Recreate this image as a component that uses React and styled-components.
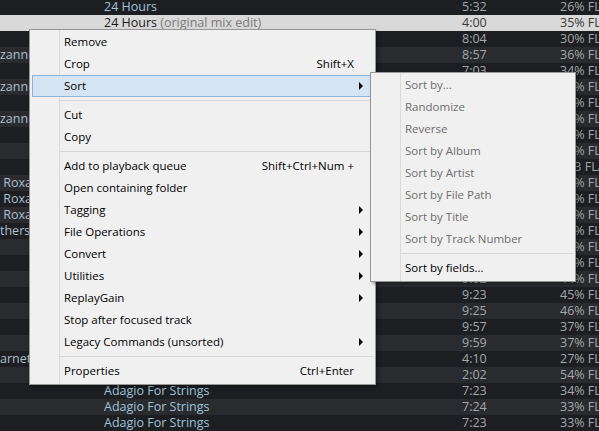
import React from "react";
import styled, { createGlobalStyle } from "styled-components";

const GlobalStyle = createGlobalStyle`
  html, body {
    margin: 0;
    padding: 0;
    width: 599px;
    height: 431px;
    overflow: hidden;
    background: #1e1f22;
  }
  * {
    box-sizing: border-box;
  }
`;

const rows = [
  { title: "24 Hours", time: "5:32", pct: "26% FLAC" },
  { title: "24 Hours", extra: "(original mix edit)", time: "4:00", pct: "35% FLAC", selected: true },
  { time: "8:04", pct: "30% FLAC" },
  { artist: "zanne", time: "8:57", pct: "36% FLAC" },
  { time: "7:03", pct: "34% FLAC" },
  { artist: "zanne", time: "7:12", pct: "31% FLAC" },
  { time: "6:40", pct: "33% FLAC" },
  { artist: "zanne", time: "7:45", pct: "29% FLAC" },
  { time: "5:58", pct: "32% FLAC" },
  { time: "6:21", pct: "38% FLAC" },
  { time: "8:10", pct: "153 FLAC" },
  { artist: " Roxa", time: "4:48", pct: "41% FLAC" },
  { artist: " Roxa", time: "5:05", pct: "40% FLAC" },
  { artist: " Roxa", time: "4:52", pct: "39% FLAC" },
  { artist: "thers", time: "6:33", pct: "35% FLAC" },
  { time: "7:01", pct: "36% FLAC" },
  { time: "8:44", pct: "42% FLAC" },
  { time: "9:02", pct: "44% FLAC" },
  { time: "9:23", pct: "45% FLAC" },
  { time: "9:25", pct: "46% FLAC" },
  { time: "9:57", pct: "37% FLAC" },
  { time: "9:59", pct: "37% FLAC" },
  { artist: "arnet", time: "4:10", pct: "27% FLAC" },
  { time: "2:02", pct: "54% FLAC" },
  { title: "Adagio For Strings", time: "7:23", pct: "34% FLAC" },
  { title: "Adagio For Strings", time: "7:24", pct: "33% FLAC" },
  { title: "Adagio For Strings", time: "7:23", pct: "33% FLAC" },
];

const mainItems = [
  { label: "Remove" },
  { label: "Crop", shortcut: "Shift+X" },
  { label: "Sort", sub: true, hot: true },
  { sep: true },
  { label: "Cut" },
  { label: "Copy" },
  { sep: true },
  { label: "Add to playback queue", shortcut: "Shift+Ctrl+Num +" },
  { label: "Open containing folder" },
  { label: "Tagging", sub: true },
  { label: "File Operations", sub: true },
  { label: "Convert", sub: true },
  { label: "Utilities", sub: true },
  { label: "ReplayGain", sub: true },
  { label: "Stop after focused track" },
  { label: "Legacy Commands (unsorted)", sub: true },
  { sep: true },
  { label: "Properties", shortcut: "Ctrl+Enter" },
];

const sortItems = [
  { label: "Sort by...", disabled: true },
  { label: "Randomize", disabled: true },
  { label: "Reverse", disabled: true },
  { label: "Sort by Album", disabled: true },
  { label: "Sort by Artist", disabled: true },
  { label: "Sort by File Path", disabled: true },
  { label: "Sort by Title", disabled: true },
  { label: "Sort by Track Number", disabled: true },
  { sep: true },
  { label: "Sort by fields..." },
];

function ContextMenu({ items, top, left, width }) {
  return (
    <Menu $top={top} $left={left} $width={width}>
      {items.map((item, index) =>
        item.sep ? (
          <Separator key={index} />
        ) : (
          <Item key={index} $hot={item.hot} $disabled={item.disabled}>
            <Label>{item.label}</Label>
            <Shortcut>{item.shortcut}</Shortcut>
            <ArrowCell>{item.sub && <Arrow />}</ArrowCell>
          </Item>
        )
      )}
    </Menu>
  );
}

export default function App() {
  return (
    <Screen>
      <GlobalStyle />
      <Playlist>
        {rows.map((row, index) => (
          <Row key={index} $odd={index % 2 === 1} $selected={row.selected}>
            <Artist>{row.artist}</Artist>
            <Title $selected={row.selected}>
              {row.title}
              {row.extra && <Extra> {row.extra}</Extra>}
            </Title>
            <Time $selected={row.selected}>{row.time}</Time>
            <Pct $selected={row.selected}>{row.pct}</Pct>
          </Row>
        ))}
      </Playlist>
      <ContextMenu items={mainItems} top={29} left={29} width={347} />
      <ContextMenu items={sortItems} top={72} left={370} width={206} />
    </Screen>
  );
}

const Screen = styled.div`
  position: relative;
  width: 599px;
  height: 431px;
  overflow: hidden;
  font-family: "Open Sans", "Noto Sans", sans-serif;
`;

const Playlist = styled.div`
  display: flex;
  flex-direction: column;
  margin-top: -1px;
`;

const Row = styled.div`
  display: grid;
  grid-template-columns: 104px 358px 30px 1fr;
  height: 16px;
  align-items: center;
  font-size: 12.5px;
  line-height: 16px;
  white-space: nowrap;
  background: ${(p) => (p.$selected ? "#d9d9d9" : p.$odd ? "#2a2b2f" : "#1d1e21")};
`;

const Artist = styled.span`
  color: #aebfcb;
  overflow: hidden;
  white-space: pre;
`;

const Title = styled.span`
  color: ${(p) => (p.$selected ? "#1a1a1a" : "#9fc3da")};
  overflow: hidden;
`;

const Extra = styled.span`
  color: #7c7c7c;
`;

const Time = styled.span`
  color: ${(p) => (p.$selected ? "#3a3a3a" : "#a3a7ab")};
`;

const Pct = styled.span`
  color: ${(p) => (p.$selected ? "#3a3a3a" : "#a3a7ab")};
  padding-left: 68px;
`;

const Menu = styled.div`
  position: absolute;
  top: ${(p) => p.$top}px;
  left: ${(p) => p.$left}px;
  width: ${(p) => p.$width}px;
  padding: 1px 0 2px;
  border: 1px solid #979797;
  background: linear-gradient(
      to right,
      transparent 29px,
      #dadada 29px,
      #dadada 30px,
      transparent 30px
    ),
    #f0f0f0;
  box-shadow: 2px 2px 3px rgba(0, 0, 0, 0.35);
  font-size: 11.5px;
  display: flex;
  flex-direction: column;
`;

const Item = styled.div`
  display: grid;
  grid-template-columns: 1fr auto 18px;
  align-items: center;
  height: 22px;
  margin: 0 2px;
  padding: 0 0 1px 31px;
  border: 1px solid ${(p) => (p.$hot ? "#8eb3d9" : "transparent")};
  background: ${(p) => (p.$hot ? "#d5e4f2" : "transparent")};
  color: ${(p) => (p.$disabled ? "#6d6d6d" : "#000")};
  white-space: nowrap;
`;

const Label = styled.span``;

const Shortcut = styled.span``;

const ArrowCell = styled.span`
  display: flex;
  align-items: center;
  padding-left: 5px;
`;

const Arrow = styled.span`
  width: 0;
  height: 0;
  border-left: 4px solid #000;
  border-top: 4px solid transparent;
  border-bottom: 4px solid transparent;
`;

const Separator = styled.div`
  height: 7px;
  margin: 0 2px 0 30px;
  display: flex;
  align-items: center;
  &::after {
    content: "";
    flex: 1;
    height: 1px;
    background: #d7d7d7;
  }
`;
